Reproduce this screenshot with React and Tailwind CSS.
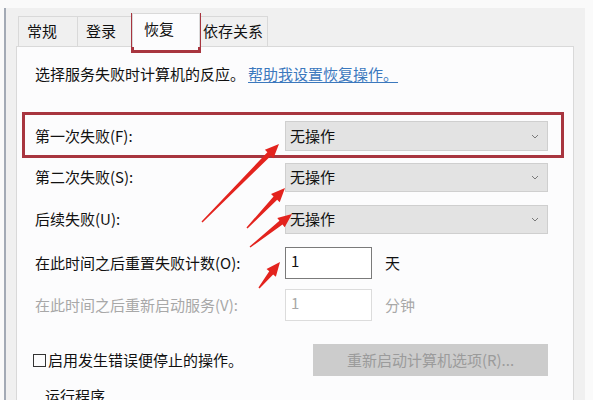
import React from 'react';

const font = { fontFamily: '"Noto Sans CJK SC", "Noto Sans", sans-serif' };

// 红色标注箭头：起点 -> 箭尖
const arrows = [
    [202, 222, 279, 144],
    [247, 228, 285, 188],
    [250, 247, 292, 214],
    [259, 288, 280, 262],
];

const arrowPoints = ([x1, y1, x2, y2]) => {
    const dx = x2 - x1;
    const dy = y2 - y1;
    const len = Math.hypot(dx, dy);
    const ux = dx / len;
    const uy = dy / len;
    const nx = -uy;
    const ny = ux;
    const head = 14;
    const bx = x2 - ux * head;
    const by = y2 - uy * head;
    const p = (x, y, w) => `${x + nx * w},${y + ny * w}`;
    return [
        p(x1, y1, 0.7),
        p(bx, by, 2.5),
        p(bx, by, 6),
        `${x2},${y2}`,
        p(bx, by, -6),
        p(bx, by, -2.5),
        p(x1, y1, -0.7),
    ].join(' ');
};

const Chevron = () => (
    <svg width="8" height="5" viewBox="0 0 8 5" className="mr-[8px]">
        <path d="M1 1l3 3 3-3" fill="none" stroke="#7a7a7a" strokeWidth="1" />
    </svg>
);

const SelectRow = ({ label, className }) => (
    <div className={`flex items-center ${className}`}>
        <div className="w-[250px] text-[15px] text-[#111]">{label}</div>
        <div className="flex h-full w-[263px] items-center justify-between border border-[#cfcfcf] bg-[#e3e3e3] pl-[4px]">
            <span className="text-[15px] text-[#111]">无操作</span>
            <Chevron />
        </div>
    </div>
);

const InputRow = ({ label, unit, disabled, className }) => (
    <div className={`flex items-center ${className}`}>
        <div className={`w-[250px] text-[15px] ${disabled ? 'text-[#a8a8a8]' : 'text-[#111]'}`}>{label}</div>
        <div
            className={`flex h-full w-[87px] items-start border bg-white pl-[5px] pt-[2px] text-[15px] ${
                disabled ? 'border-[#dcdcdc] text-[#a8a8a8]' : 'border-[#7a7a7a] text-[#111]'
            }`}
        >
            1
        </div>
        <div className={`ml-[13px] text-[15px] ${disabled ? 'text-[#a8a8a8]' : 'text-[#111]'}`}>{unit}</div>
    </div>
);

const Tab = ({ label, width, active }) =>
    active ? (
        <div
            className="relative z-10 -mb-px flex h-[34px] items-center border border-b-0 border-[#d9d9d9] bg-[#fcfcfd] pb-[2px] pl-[11px] text-[15px] text-[#111]"
            style={{ width }}
        >
            {label}
        </div>
    ) : (
        <div
            className="flex h-[30px] items-center border border-b-0 border-r-0 border-[#d9d9d9] bg-[#f0f0f0] pl-[8px] text-[15px] text-[#111]"
            style={{ width }}
        >
            {label}
        </div>
    );

export default function App() {
    return (
        <div className="relative h-[400px] w-[593px] overflow-hidden bg-[#fafafa]" style={font}>
            <div className="flex h-full pt-[8px]">
                <div className="w-[4px]" />
                <div className="w-[2px] bg-[#a3aab5]" />
                <div className="flex flex-1 flex-col bg-[#f0f0f0] pl-[10px] pr-[11px] pt-[5px]">
                    {/* 选项卡 */}
                    <div className="flex items-end pl-[2px]">
                        <Tab label="常规" width={59} />
                        <Tab label="登录" width={55} />
                        <Tab label="恢复" width={68} active />
                        <div className="flex h-[30px] w-[68px] items-center border border-b-0 border-l-0 border-[#d9d9d9] bg-[#f0f0f0] pl-[3px] text-[15px] text-[#111]">
                            依存关系
                        </div>
                    </div>

                    {/* 面板 */}
                    <div className="flex-1 border border-[#d9d9d9] bg-[#fcfcfd] pl-[18px] pt-[17px]">
                        <div className="flex h-[20px] items-center text-[15px] text-[#111]">
                            选择服务失败时计算机的反应。
                            <span className="ml-[3px] text-[#3b78bd] underline underline-offset-2">帮助我设置恢复操作。</span>
                        </div>

                        <SelectRow label="第一次失败(F):" className="mt-[37px] h-[30px]" />
                        <SelectRow label="第二次失败(S):" className="mt-[12px] h-[29px]" />
                        <SelectRow label="后续失败(U):" className="mt-[13px] h-[29px]" />
                        <InputRow label="在此时间之后重置失败计数(O):" unit="天" className="mt-[13px] h-[32px]" />
                        <InputRow label="在此时间之后重新启动服务(V):" unit="分钟" disabled className="mt-[10px] h-[32px]" />

                        <div className="mt-[23px] flex h-[32px] items-center">
                            <div className="flex w-[278px] items-center text-[15px] text-[#111]">
                                <span className="-ml-[2px] mr-[2px] h-[13px] w-[13px] border border-[#333]" />
                                启用发生错误便停止的操作。
                            </div>
                            <div className="flex h-full w-[235px] items-center justify-center bg-[#cccccc] text-[15px] text-[#9b9b9b]">
                                重新启动计算机选项(R)...
                            </div>
                        </div>

                        <div className="mt-[10px] pl-[10px] text-[15px] leading-[20px] text-[#111]">运行程序</div>
                    </div>
                </div>
                <div className="w-[8px]" />
            </div>

            {/* 标注 */}
            <div className="pointer-events-none absolute left-[131px] top-[13px] h-[40px] w-[70px] border-[3px] border-[#a8353f]" />
            <div className="pointer-events-none absolute left-[22px] top-[112px] h-[46px] w-[542px] border-[3px] border-[#a8353f]" />
            <svg className="pointer-events-none absolute left-0 top-0" width="593" height="400">
                {arrows.map((a, i) => (
                    <polygon key={i} points={arrowPoints(a)} fill="#e3231e" />
                ))}
            </svg>
        </div>
    );
}
